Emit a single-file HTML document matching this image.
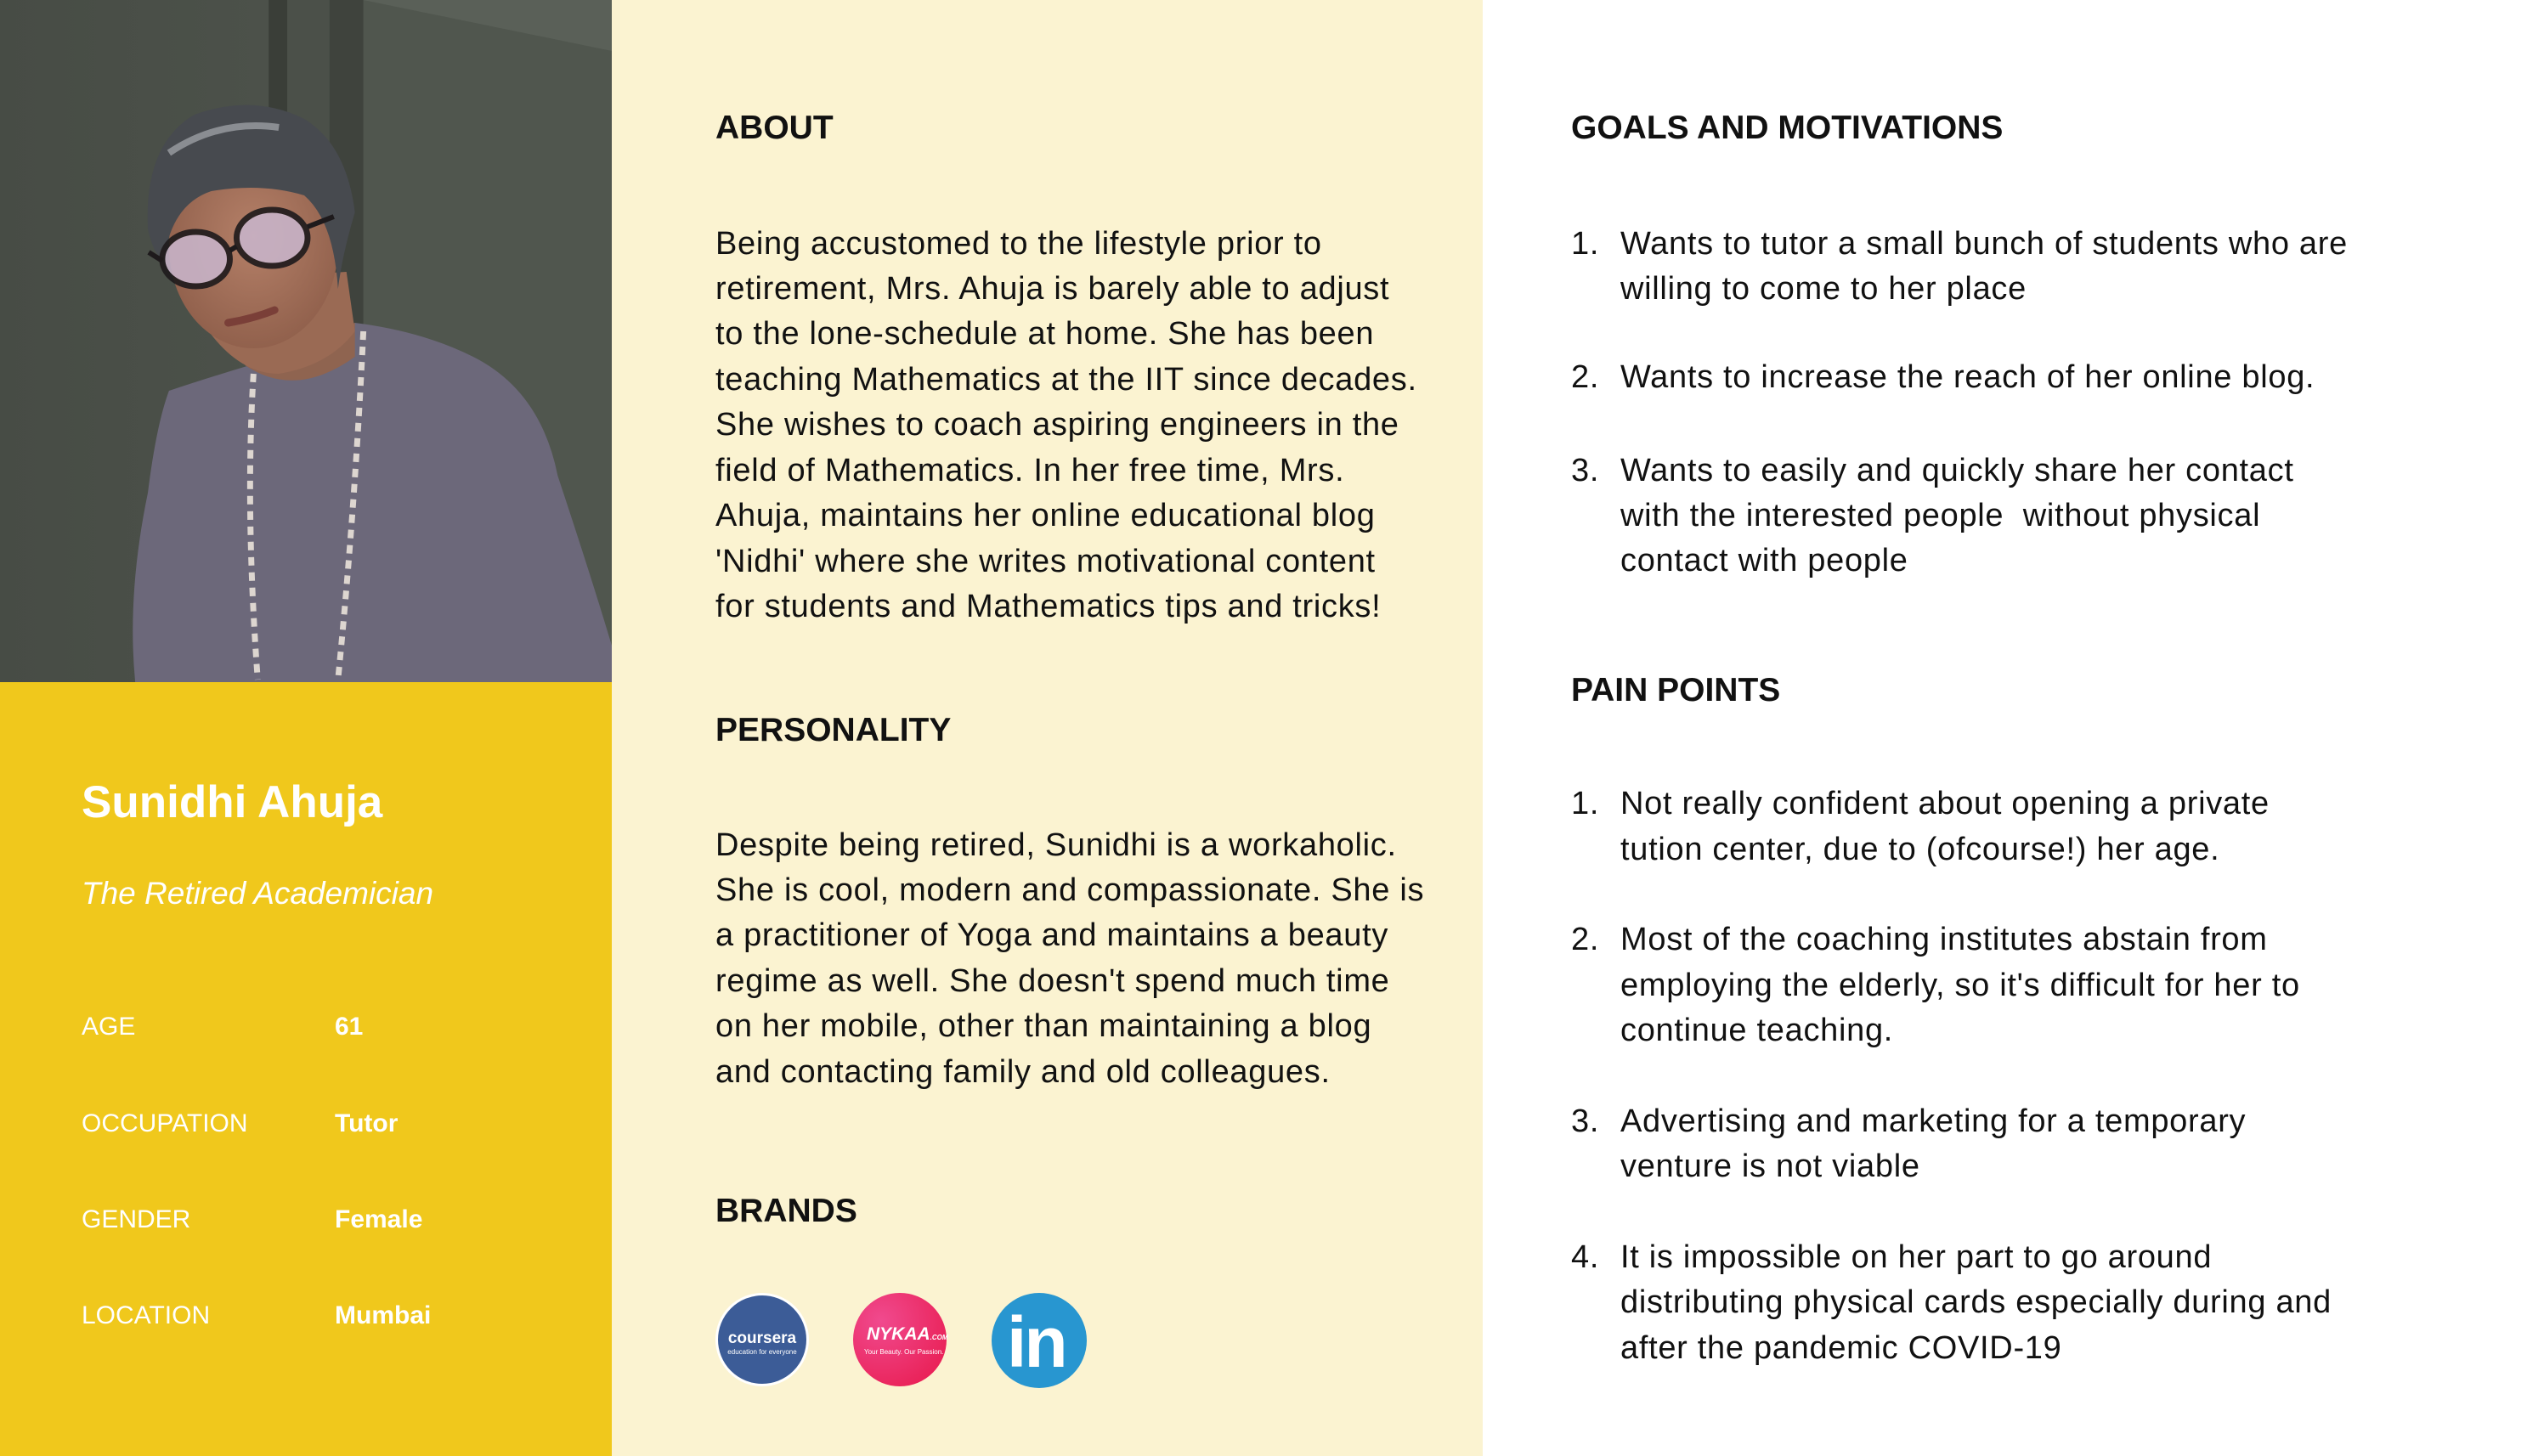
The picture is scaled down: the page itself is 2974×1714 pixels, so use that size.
<!DOCTYPE html>
<html><head><meta charset="utf-8"><style>
html,body{margin:0;padding:0}
body{width:2974px;height:1714px;position:relative;overflow:hidden;background:#fff;font-family:"Liberation Sans",sans-serif;color:#111}
.t{position:absolute;line-height:1;white-space:nowrap}
.b{font-size:38px;letter-spacing:0.7px}
.h{font-size:39px;font-weight:bold}
.w{color:#fff}
.lab{font-size:30px;color:#fff}
.val{font-size:30px;color:#fff;font-weight:bold}
</style></head><body>
<div style="position:absolute;left:0;top:0;width:720px;height:1714px;background:#F0C81C"></div>
<div style="position:absolute;left:720px;top:0;width:1025px;height:1714px;background:#FBF3D1"></div>

<svg style="position:absolute;left:0;top:0" width="720" height="803" viewBox="0 0 724 803" preserveAspectRatio="none">
<defs>
<linearGradient id="bg" x1="0" x2="1"><stop offset="0" stop-color="#474c45"/><stop offset="1" stop-color="#525850"/></linearGradient>
<radialGradient id="sk" cx="0.5" cy="0.45" r="0.6"><stop offset="0" stop-color="#b58068"/><stop offset="1" stop-color="#8e5e4a"/></radialGradient>
</defs>
<rect width="724" height="803" fill="url(#bg)"/>
<rect x="318" y="0" width="22" height="803" fill="#3a3e38"/>
<rect x="340" y="0" width="50" height="803" fill="#4b5049"/>
<rect x="390" y="0" width="40" height="803" fill="#3f433d"/>
<rect x="430" y="0" width="294" height="803" fill="#50564e"/>
<path d="M430 0 L724 60 L724 0Z" fill="#5a6058"/>
<path d="M200 460 Q260 440 330 420 L420 380 Q500 390 560 420 Q640 460 660 560 Q700 680 724 760 L724 803 L160 803 Q150 700 175 580 Q185 500 200 460Z" fill="#6c687a"/>
<path d="M290 430 Q350 470 420 420 L420 380 Q360 400 300 400Z" fill="#8f6450"/>
<path d="M240 380 Q280 440 330 440 Q390 430 420 390 L410 320 L250 330Z" fill="#9a6a54"/>
<ellipse cx="300" cy="290" rx="100" ry="120" fill="url(#sk)"/>
<path d="M175 270 Q170 170 230 135 Q300 110 360 140 Q410 170 420 250 Q405 300 400 340 Q395 260 360 230 Q310 215 250 225 Q205 240 195 300 Q185 310 175 270Z" fill="#474a4f"/>
<path d="M200 180 Q260 140 330 150" stroke="#8a8d92" stroke-width="8" fill="none"/>
<ellipse cx="232" cy="305" rx="40" ry="32" fill="#c8b3c8" stroke="#1e1a1c" stroke-width="7" opacity="0.9"/>
<ellipse cx="322" cy="280" rx="42" ry="33" fill="#c8b3c8" stroke="#1e1a1c" stroke-width="7" opacity="0.9"/>
<path d="M272 295 L280 290 M364 267 L395 255 M192 307 L176 297" stroke="#1e1a1c" stroke-width="6"/>
<path d="M270 380 Q300 375 325 365" stroke="#7a3f38" stroke-width="9" fill="none" stroke-linecap="round"/>
<path d="M300 440 Q290 600 305 800 M430 390 Q420 600 400 800" stroke="#ddd6d0" stroke-width="7" fill="none" stroke-dasharray="10 8"/>
</svg>

<div class="t w" style="left:96px;top:918px;font-size:53px;font-weight:bold">Sunidhi Ahuja</div>
<div class="t w" style="left:96px;top:1033px;font-size:37px;font-style:italic">The Retired Academician</div>
<div class="t lab" style="left:96px;top:1194px">AGE</div><div class="t val" style="left:394px;top:1194px">61</div>
<div class="t lab" style="left:96px;top:1308px">OCCUPATION</div><div class="t val" style="left:394px;top:1308px">Tutor</div>
<div class="t lab" style="left:96px;top:1421px">GENDER</div><div class="t val" style="left:394px;top:1421px">Female</div>
<div class="t lab" style="left:96px;top:1534px">LOCATION</div><div class="t val" style="left:394px;top:1534px">Mumbai</div>

<div class="t h" style="left:842px;top:131px">ABOUT</div>
<div class="t b" style="left:842px;top:268px">Being accustomed to the lifestyle prior to</div>
<div class="t b" style="left:842px;top:321px">retirement, Mrs. Ahuja is barely able to adjust</div>
<div class="t b" style="left:842px;top:374px">to the lone-schedule at home. She has been</div>
<div class="t b" style="left:842px;top:428px">teaching Mathematics at the IIT since decades.</div>
<div class="t b" style="left:842px;top:481px">She wishes to coach aspiring engineers in the</div>
<div class="t b" style="left:842px;top:535px">field of Mathematics. In her free time, Mrs.</div>
<div class="t b" style="left:842px;top:588px">Ahuja, maintains her online educational blog</div>
<div class="t b" style="left:842px;top:642px">'Nidhi' where she writes motivational content</div>
<div class="t b" style="left:842px;top:695px">for students and Mathematics tips and tricks!</div>

<div class="t h" style="left:842px;top:840px">PERSONALITY</div>
<div class="t b" style="left:842px;top:976px">Despite being retired, Sunidhi is a workaholic.</div>
<div class="t b" style="left:842px;top:1029px">She is cool, modern and compassionate. She is</div>
<div class="t b" style="left:842px;top:1082px">a practitioner of Yoga and maintains a beauty</div>
<div class="t b" style="left:842px;top:1136px">regime as well. She doesn't spend much time</div>
<div class="t b" style="left:842px;top:1189px">on her mobile, other than maintaining a blog</div>
<div class="t b" style="left:842px;top:1243px">and contacting family and old colleagues.</div>

<div class="t h" style="left:842px;top:1406px">BRANDS</div>
<div style="position:absolute;left:842px;top:1522px;width:110px;height:110px;border-radius:50%;background:#3c5c97;border:3px solid #fff;box-sizing:border-box"></div>
<div class="t" style="left:852px;top:1566px;font-size:19px;font-weight:bold;color:#fff;width:90px;text-align:center">coursera</div>
<div class="t" style="left:852px;top:1588px;font-size:8px;color:#fff;width:90px;text-align:center">education for everyone</div>
<div style="position:absolute;left:1004px;top:1522px;width:110px;height:110px;border-radius:50%;background:radial-gradient(circle at 30% 30%,#f04a8e,#e8174a)"></div>
<div class="t" style="left:1020px;top:1560px;font-size:21px;font-weight:bold;font-style:italic;color:#fff">NYKAA<span style="font-size:8px">.COM</span></div>
<div class="t" style="left:1017px;top:1588px;font-size:8px;color:#fff">Your Beauty. Our Passion.</div>
<div style="position:absolute;left:1167px;top:1522px;width:112px;height:112px;border-radius:50%;background:#2896d0"></div>
<div class="t" style="left:1185px;top:1538px;font-size:84px;font-weight:bold;color:#fff;letter-spacing:-3px">in</div>

<div class="t h" style="left:1849px;top:131px">GOALS AND MOTIVATIONS</div>
<div class="t b" style="left:1849px;top:268px">1.</div><div class="t b" style="left:1907px;top:268px">Wants to tutor a small bunch of students who are</div>
<div class="t b" style="left:1907px;top:321px">willing to come to her place</div>
<div class="t b" style="left:1849px;top:425px">2.</div><div class="t b" style="left:1907px;top:425px">Wants to increase the reach of her online blog.</div>
<div class="t b" style="left:1849px;top:535px">3.</div><div class="t b" style="left:1907px;top:535px">Wants to easily and quickly share her contact</div>
<div class="t b" style="left:1907px;top:588px">with the interested people &nbsp;without physical</div>
<div class="t b" style="left:1907px;top:641px">contact with people</div>

<div class="t h" style="left:1849px;top:793px">PAIN POINTS</div>
<div class="t b" style="left:1849px;top:927px">1.</div><div class="t b" style="left:1907px;top:927px">Not really confident about opening a private</div>
<div class="t b" style="left:1907px;top:981px">tution center, due to (ofcourse!) her age.</div>
<div class="t b" style="left:1849px;top:1087px">2.</div><div class="t b" style="left:1907px;top:1087px">Most of the coaching institutes abstain from</div>
<div class="t b" style="left:1907px;top:1141px">employing the elderly, so it's difficult for her to</div>
<div class="t b" style="left:1907px;top:1194px">continue teaching.</div>
<div class="t b" style="left:1849px;top:1301px">3.</div><div class="t b" style="left:1907px;top:1301px">Advertising and marketing for a temporary</div>
<div class="t b" style="left:1907px;top:1354px">venture is not viable</div>
<div class="t b" style="left:1849px;top:1461px">4.</div><div class="t b" style="left:1907px;top:1461px">It is impossible on her part to go around</div>
<div class="t b" style="left:1907px;top:1514px">distributing physical cards especially during and</div>
<div class="t b" style="left:1907px;top:1568px">after the pandemic COVID-19</div>
</body></html>
